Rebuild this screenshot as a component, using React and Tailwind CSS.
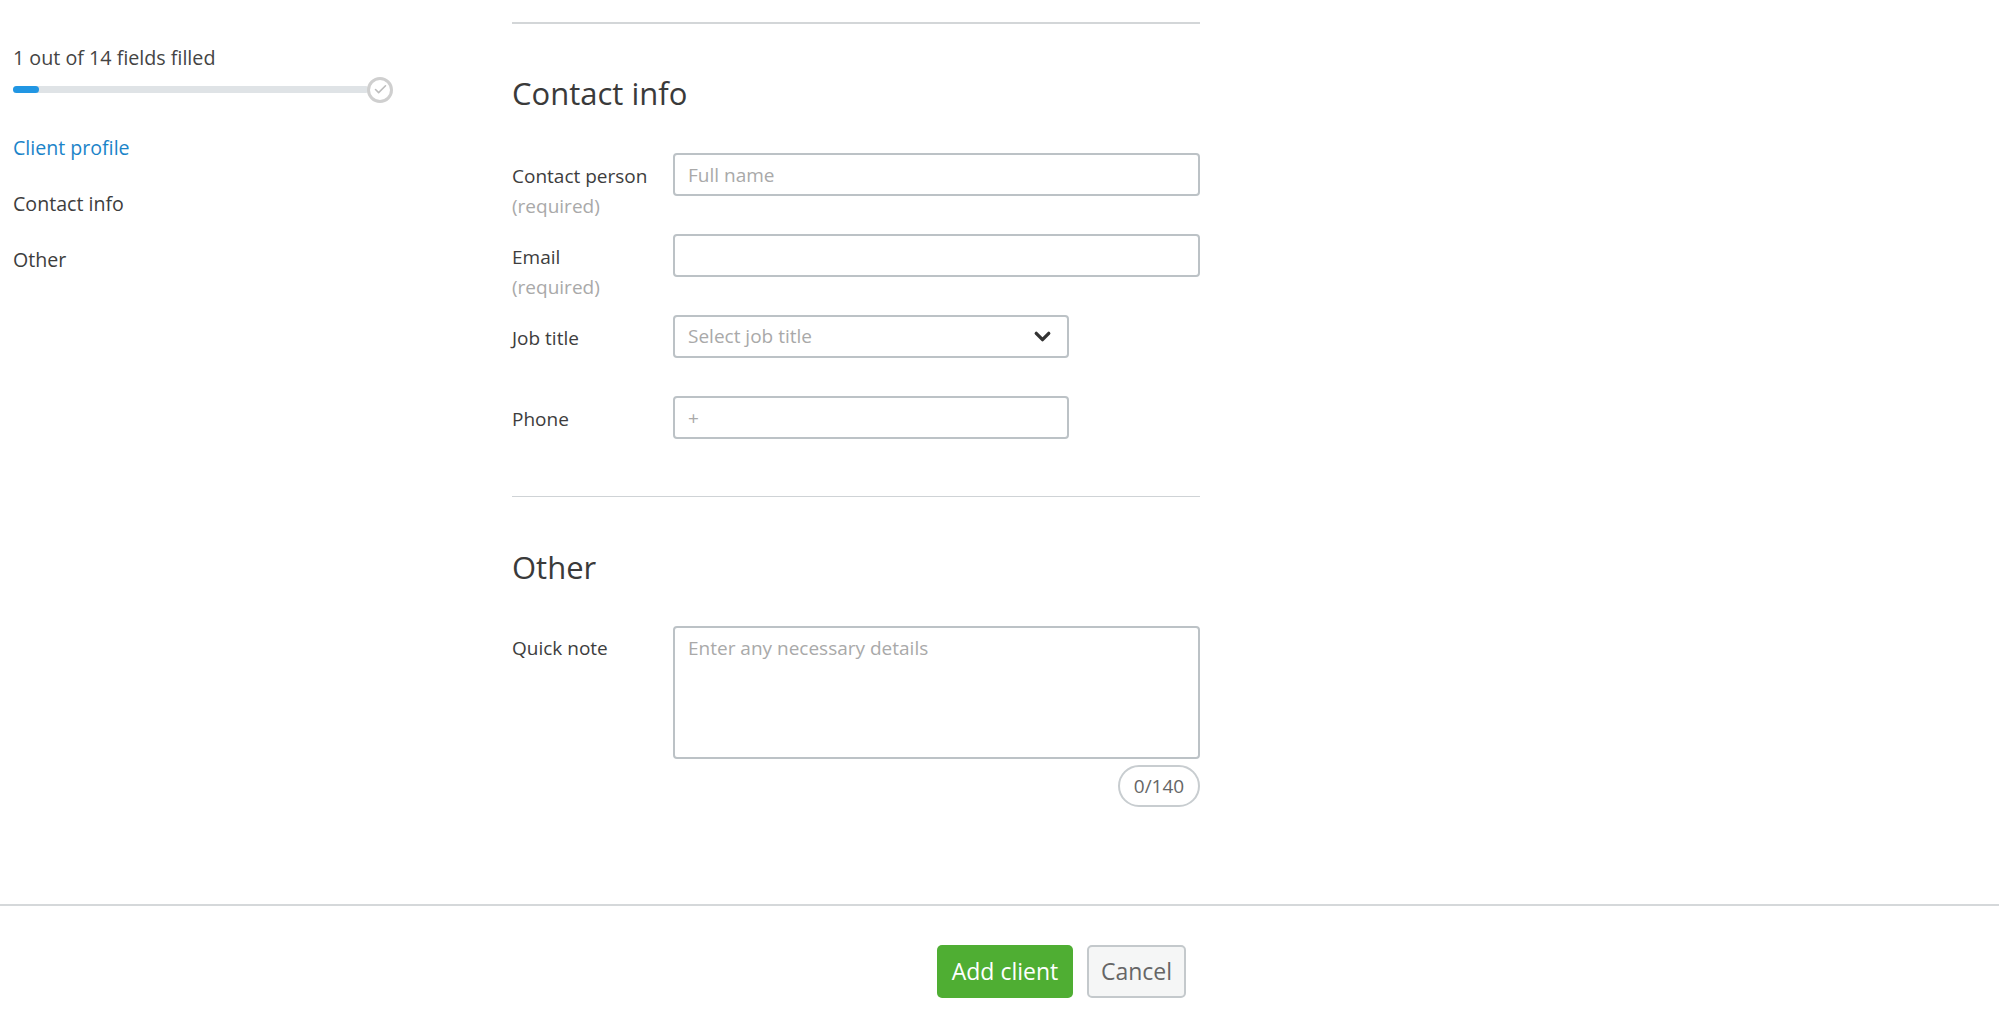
import { Check, ChevronDown } from "lucide-react";

const labelClass = "text-[19px] leading-[30px] text-[#3d3d3d]";
const inputClass =
    "h-[43px] border-2 border-[#bcc2c6] rounded-[4px] px-[13px] text-[19px] text-[#333] bg-white outline-none placeholder:text-[#a9a9a9]";

function Field({ label, required, children }) {
    return (
        <div className="flex h-[81px]">
            <div className="w-[161px] pt-[8px]">
                <div className={labelClass}>{label}</div>
                {required && <div className="text-[19px] leading-[30px] text-[#a9a9a9]">(required)</div>}
            </div>
            {children}
        </div>
    );
}

export default function App() {
    return (
        <div className="h-[1009px] flex flex-col bg-white overflow-hidden font-['Open_Sans',sans-serif]">
            <div className="flex-1 flex">
                {/* Progress sidebar */}
                <aside className="w-[512px] pl-[13px] pt-[43px]">
                    <div className="text-[19.7px] leading-[30px] text-[#444]">1 out of 14 fields filled</div>
                    <div className="flex items-center w-[380px] h-[27px] mt-[3px]">
                        <div className="flex-1 h-[7px] rounded-full bg-[#dfe3e6]">
                            <div className="w-[26px] h-[7px] rounded-full bg-[#2196e3]" />
                        </div>
                        <div className="w-[26px] h-[26px] rounded-full border-[3px] border-[#cfcfcf] flex items-center justify-center -ml-[2px]">
                            <Check size={15} strokeWidth={2.5} className="text-[#bdbdbd]" />
                        </div>
                    </div>
                    <nav className="mt-[17px] flex flex-col text-[19.6px]">
                        <a className="h-[56px] leading-[56px] text-[#1b84c9]">Client profile</a>
                        <a className="h-[56px] leading-[56px] text-[#3d3d3d]">Contact info</a>
                        <a className="h-[56px] leading-[56px] text-[#3d3d3d]">Other</a>
                    </nav>
                </aside>

                {/* Form */}
                <main className="w-[688px] pt-[22px]">
                    <div className="border-t-2 border-[#d3d6d8]" />
                    <h2 className="mt-[49px] h-[40px] text-[31px] leading-[40px] text-[#3a3a3a]">Contact info</h2>
                    <div className="mt-[40px]">
                        <Field label="Contact person" required>
                            <input className={`${inputClass} flex-1`} placeholder="Full name" />
                        </Field>
                        <Field label="Email" required>
                            <input className={`${inputClass} flex-1`} />
                        </Field>
                        <Field label="Job title">
                            <div className={`${inputClass} w-[396px] flex items-center justify-between`}>
                                <span className="text-[#a9a9a9]">Select job title</span>
                                <ChevronDown size={25} strokeWidth={3.2} className="text-[#333] -mr-[1px]" />
                            </div>
                        </Field>
                        <Field label="Phone">
                            <input className={`${inputClass} w-[396px]`} placeholder="+" />
                        </Field>
                    </div>
                    <div className="mt-[19px] border-t border-[#cfd3d6]" />
                    <h2 className="mt-[50px] h-[40px] text-[31px] leading-[40px] text-[#3a3a3a]">Other</h2>
                    <div className="mt-[39px] flex">
                        <div className={`w-[161px] pt-[7px] ${labelClass}`}>Quick note</div>
                        <div className="flex-1 flex flex-col items-end">
                            <textarea
                                className="w-full h-[133px] border-2 border-[#bcc2c6] rounded-[4px] px-[13px] py-[6px] text-[19px] bg-white outline-none resize-none placeholder:text-[#a9a9a9]"
                                placeholder="Enter any necessary details"
                            />
                            <div className="mt-[6px] h-[42px] w-[82px] border-2 border-[#c8cdd0] rounded-full flex items-center justify-center text-[19px] text-[#666]">
                                0/140
                            </div>
                        </div>
                    </div>
                </main>
            </div>

            {/* Footer buttons */}
            <footer className="h-[105px] border-t-2 border-[#d5d8da] flex justify-center gap-[14px] pt-[39px] pl-[124px]">
                <button className="h-[53px] w-[136px] rounded-[5px] bg-[#4fae33] text-white text-[23px]">Add client</button>
                <button className="h-[53px] w-[99px] rounded-[5px] bg-[#f5f6f6] border-2 border-[#c4c9cc] text-[#666] text-[23px]">Cancel</button>
            </footer>
        </div>
    );
}
